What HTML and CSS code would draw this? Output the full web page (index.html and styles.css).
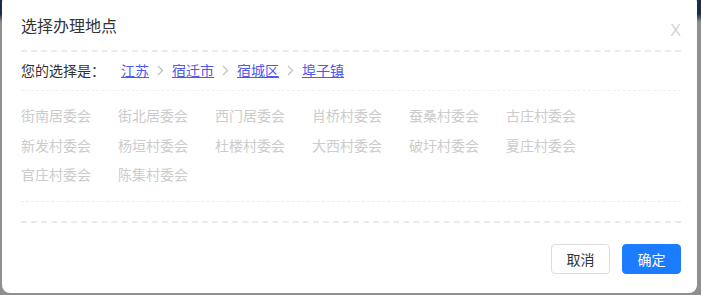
FILE: index.html
```html
<!DOCTYPE html>
<html lang="zh-CN">
<head>
<meta charset="utf-8">
<title>选择办理地点</title>
<link rel="stylesheet" href="styles.css">
</head>
<body>
<div class="dialog">
  <div class="header">
    <div class="title">选择办理地点</div>
    <div class="close">x</div>
  </div>
  <div class="selected">
    <span class="label">您的选择是：</span>
    <a class="crumb" href="#">江苏</a>
    <svg class="sep" width="7" height="11" viewBox="0 0 7 11"><path d="M1 1 L5.5 5.5 L1 10" fill="none" stroke="#c4c4c4" stroke-width="1.4"/></svg>
    <a class="crumb" href="#">宿迁市</a>
    <svg class="sep" width="7" height="11" viewBox="0 0 7 11"><path d="M1 1 L5.5 5.5 L1 10" fill="none" stroke="#c4c4c4" stroke-width="1.4"/></svg>
    <a class="crumb" href="#">宿城区</a>
    <svg class="sep" width="7" height="11" viewBox="0 0 7 11"><path d="M1 1 L5.5 5.5 L1 10" fill="none" stroke="#c4c4c4" stroke-width="1.4"/></svg>
    <a class="crumb" href="#">埠子镇</a>
  </div>
  <div class="options">
    <span class="opt">街南居委会</span>
    <span class="opt">街北居委会</span>
    <span class="opt">西门居委会</span>
    <span class="opt">肖桥村委会</span>
    <span class="opt">蚕桑村委会</span>
    <span class="opt">古庄村委会</span>
    <span class="opt">新发村委会</span>
    <span class="opt">杨垣村委会</span>
    <span class="opt">杜楼村委会</span>
    <span class="opt">大西村委会</span>
    <span class="opt">破圩村委会</span>
    <span class="opt">夏庄村委会</span>
    <span class="opt">官庄村委会</span>
    <span class="opt">陈集村委会</span>
  </div>
  <div class="spacer"></div>
  <div class="footer">
    <button class="btn btn-cancel">取消</button>
    <button class="btn btn-ok">确定</button>
  </div>
</div>
</body>
</html>
```

FILE: styles.css
```css
html, body {
  margin: 0;
  padding: 0;
}
body {
  width: 701px;
  height: 295px;
  overflow: hidden;
  background: linear-gradient(to bottom, #1c2b52 0px, #1c2b52 14px, #8f8f8f 22px, #8f8f8f 100%);
  font-family: "Noto Sans CJK SC", "Noto Sans", sans-serif;
  padding-left: 2px;
  box-sizing: border-box;
}
.dialog {
  width: 695px;
  height: 299px;
  margin-top: -6px;
  background: #fff;
  border-radius: 8px;
  box-sizing: border-box;
  padding: 0 16px 0 19px;
  display: flex;
  flex-direction: column;
}
.header {
  display: flex;
  justify-content: space-between;
  padding: 19px 0 11px;
  border-bottom: 2px dashed #ebebeb;
}
.title {
  font-size: 16px;
  line-height: 24px;
  color: #333;
}
.close {
  font-family: "Liberation Sans", Arial, sans-serif;
  font-size: 16px;
  line-height: 16px;
  color: #d4d4d4;
  padding-top: 10px;
  padding-right: 0;
  text-transform: uppercase;
}
.selected {
  display: flex;
  align-items: center;
  padding: 8px 0 10px;
  font-size: 14px;
  line-height: 20px;
  border-bottom: 1px dashed #efefef;
}
.label {
  color: #333;
  width: 100px;
}
.crumb {
  color: #4f57f2;
  text-decoration: underline;
}
.sep {
  margin: 1px 8px 0 8px;
  display: block;
}
.options {
  display: grid;
  grid-template-columns: repeat(6, 70px);
  column-gap: 27px;
  row-gap: 9.5px;
  padding: 14px 0 17px;
  font-size: 14px;
  line-height: 20px;
  border-bottom: 1px dashed #efefef;
}
.opt {
  color: #cccccc;
  white-space: nowrap;
}
.spacer {
  height: 19px;
  border-bottom: 2px dashed #ebebeb;
}
.footer {
  display: flex;
  justify-content: flex-end;
  gap: 12px;
  padding-top: 21px;
}
.btn {
  font-family: "Noto Sans CJK SC", "Noto Sans", sans-serif;
  font-size: 14px;
  height: 30px;
  border-radius: 4px;
  cursor: pointer;
  padding: 0;
}
.btn-cancel {
  width: 59px;
  background: #fff;
  border: 1px solid #dcdcdc;
  color: #333;
}
.btn-ok {
  width: 59px;
  background: #1b7cff;
  border: 1px solid #1b7cff;
  color: #fff;
}
```
